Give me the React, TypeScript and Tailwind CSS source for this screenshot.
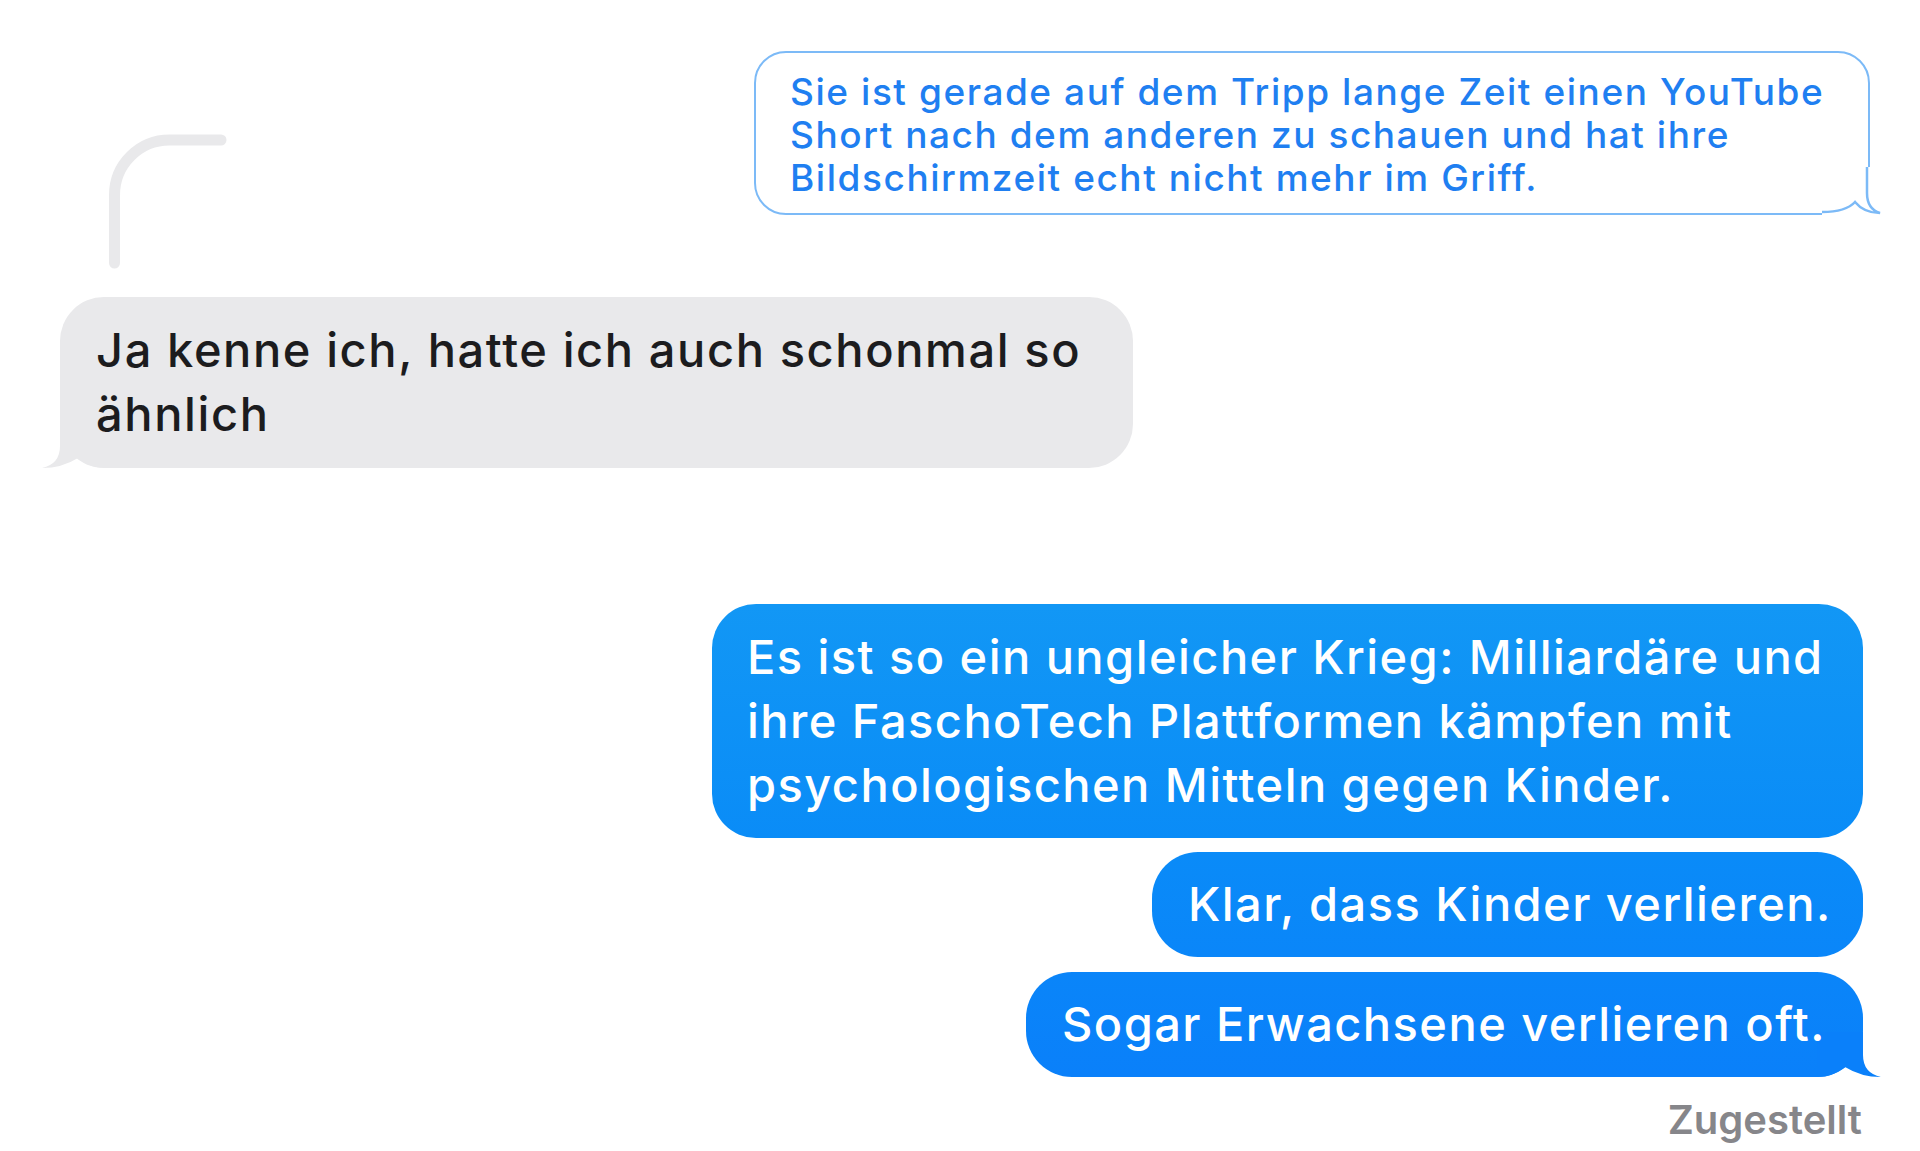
import React from "react";

const BubbleTailRight = ({ color }: { color: string }) => (
  <svg
    className="absolute right-[-20px] bottom-0 pointer-events-none"
    width="70"
    height="50"
    viewBox="0 0 70 50"
  >
    <path d="M50 5 L50 28 Q50 46 68 50 Q48 50 32 40 Q20 50 4 50 L4 5 Z" fill={color} />
  </svg>
);

const BubbleTailLeft = ({ color }: { color: string }) => (
  <svg
    className="absolute left-[-20px] bottom-0 pointer-events-none"
    width="70"
    height="50"
    viewBox="0 0 70 50"
  >
    <path d="M20 5 L20 28 Q20 46 2 50 Q22 50 38 40 Q50 50 66 50 L66 5 Z" fill={color} />
  </svg>
);

// outlined tail for the quoted message, paints over the div corner
const OutlineTail = () => (
  <svg
    className="absolute right-[-16px] bottom-[-4px] pointer-events-none overflow-visible"
    width="66"
    height="54"
    viewBox="0 0 66 54"
  >
    <rect x="4" y="4" width="48" height="48" fill="#ffffff" />
    <path
      d="M49 4 L49 30 Q49 46 62 50 Q46 50 37 39 Q28 49 4 49"
      fill="none"
      stroke="#7cbaf7"
      strokeWidth="2.5"
    />
  </svg>
);

const ReplyHook = () => (
  <svg className="absolute left-[100px] top-[130px]" width="140" height="150" viewBox="0 0 140 150">
    <path
      d="M14.5 133 L14.5 65 A55 55 0 0 1 69.5 10 L121 10"
      fill="none"
      stroke="#e9e9eb"
      strokeWidth="11"
      strokeLinecap="round"
    />
  </svg>
);

export default function App() {
  return (
    <div className="relative w-[1920px] h-[1151px] overflow-hidden bg-white font-[Inter,sans-serif] flex flex-col pt-[51px]">
      <ReplyHook />

      {/* quoted message */}
      <div className="flex justify-end pr-[50px]">
        <div className="relative w-[1116px] h-[164px] rounded-[32px] border-[2.5px] border-[#7cbaf7] pl-[34px] pt-[16.5px] text-[37px] leading-[43px] font-medium text-[#1f7ff1] tracking-[1.55px]">
          <OutlineTail />
          <span className="relative block whitespace-nowrap">Sie ist gerade auf dem Tripp lange Zeit einen YouTube</span>
          <span className="relative block whitespace-nowrap">Short nach dem anderen zu schauen und hat ihre</span>
          <span className="relative block whitespace-nowrap">Bildschirmzeit echt nicht mehr im Griff.</span>
        </div>
      </div>

      {/* incoming */}
      <div className="flex justify-start pl-[60px] mt-[82px]">
        <div className="relative w-[1073px] h-[171px] rounded-[44px] bg-[#e9e9eb] pl-[36px] pt-[21px] text-[47px] leading-[64px] font-medium text-[#1c1c1e] tracking-[1.6px]">
          <BubbleTailLeft color="#e9e9eb" />
          <span className="relative block whitespace-nowrap">Ja kenne ich, hatte ich auch schonmal so</span>
          <span className="relative block whitespace-nowrap">ähnlich</span>
        </div>
      </div>

      {/* outgoing */}
      <div className="flex flex-col items-end pr-[57px] mt-[136px] gap-[14px] text-white text-[47px] leading-[64px] font-medium tracking-[1.45px]">
        <div className="w-[1151px] h-[234px] rounded-[44px] bg-gradient-to-b from-[#1297f5] to-[#0a8cf7] pl-[35px] pt-[21px]">
          <span className="block whitespace-nowrap">Es ist so ein ungleicher Krieg: Milliardäre und</span>
          <span className="block whitespace-nowrap">ihre FaschoTech Plattformen kämpfen mit</span>
          <span className="block whitespace-nowrap">psychologischen Mitteln gegen Kinder.</span>
        </div>
        <div className="w-[711px] h-[105px] rounded-[46px] bg-gradient-to-b from-[#0a8bf8] to-[#0a86f9] pl-[36px] pt-[20px]">
          <span className="block whitespace-nowrap">Klar, dass Kinder verlieren.</span>
        </div>
        <div className="relative w-[837px] h-[105px] rounded-[46px] bg-gradient-to-b from-[#0a85f9] to-[#0a80fa] pl-[36px] pt-[20px] mt-[1px]">
          <BubbleTailRight color="#0a80fa" />
          <span className="relative block whitespace-nowrap">Sogar Erwachsene verlieren oft.</span>
        </div>
      </div>

      <div className="flex justify-end pr-[58px] mt-[19px]">
        <span className="text-[40px] leading-[48px] font-semibold text-[#86868a]">Zugestellt</span>
      </div>
    </div>
  );
}
